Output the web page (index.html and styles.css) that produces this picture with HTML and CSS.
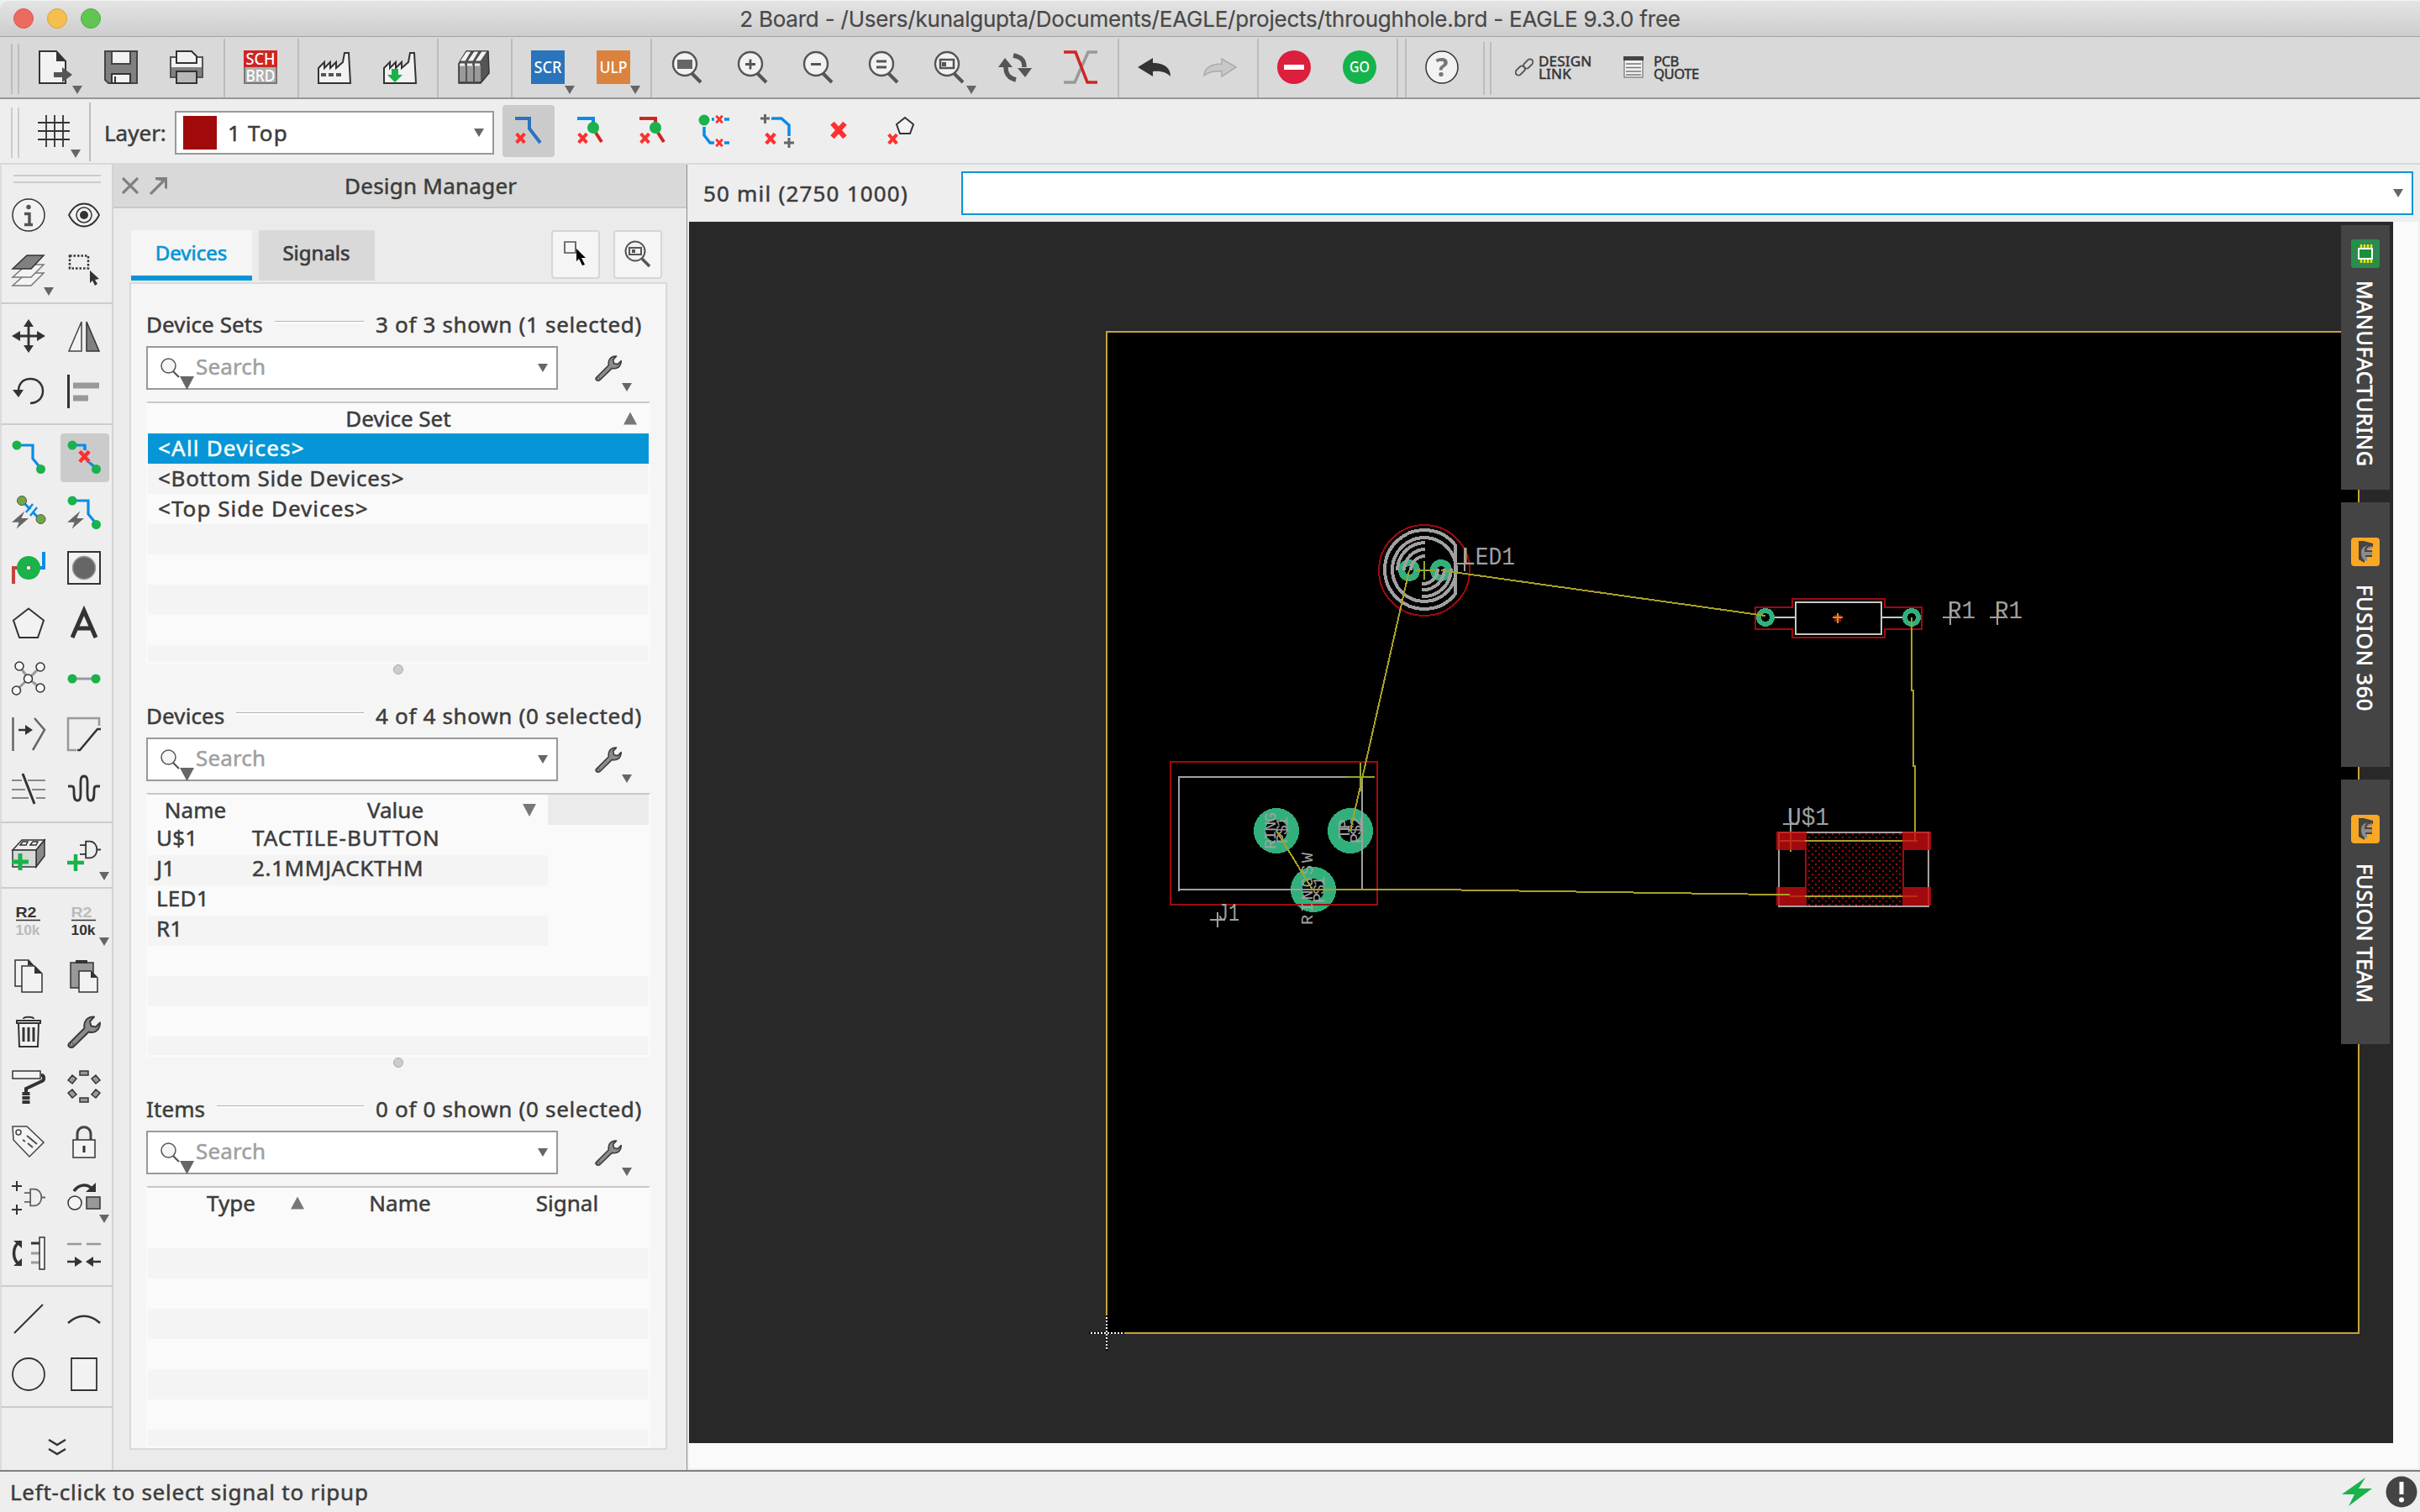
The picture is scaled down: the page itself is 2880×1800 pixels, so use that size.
FILE: index.html
```html
<!DOCTYPE html>
<html lang="en">
<head>
<meta charset="utf-8">
<title>2 Board - EAGLE 9.3.0 free</title>
<link rel="stylesheet" href="styles.css">
</head>
<body>
<svg class="defs" width="0" height="0">
  <defs>
    <symbol id="glass" viewBox="0 0 40 40"><path d="M25 27l11 11" stroke="#555" stroke-width="4"/><circle cx="17" cy="16" r="14" fill="#f2f2f2" stroke="#555" stroke-width="2.4"/></symbol>
    <symbol id="find" viewBox="0 0 24 24"><path d="M15 16l7 7" stroke="#555" stroke-width="2.200"/><circle cx="9.500" cy="9.500" r="8.500" fill="#f6f6f6" stroke="#555" stroke-width="1.500"/></symbol>
    <symbol id="wrench" viewBox="0 0 40 40"><path d="M2 34.500L20.500 16C19 8 24 2 32 2.500L27 8l1.500 5.500 5.500 1L39 9.500C39 18 33 22.500 25.500 20.500L7 38.500C3 40 0 37 2 34.500z" fill="#8c8c8c" stroke="#3c3c3c" stroke-width="2" stroke-linejoin="round"/><circle cx="5.500" cy="35" r="1.500" fill="#ddd" stroke="#333"/></symbol>
    <symbol id="x" viewBox="0 0 12 12"><path d="M1.500 1l9 10M10.500 1l-9 10" stroke="#ff3030" stroke-width="3.600"/></symbol>
    <symbol id="bolt" viewBox="0 0 22 22"><path d="M16 0L0 14h9L6 22 21 9h-9z" fill="#666"/></symbol>
    <symbol id="gate" viewBox="0 0 28 26"><path d="M8 2h5c13 0 13 22 0 22H8zM0 7h8M0 19h8M23 13h5" fill="none" stroke="#333" stroke-width="2"/></symbol>
    <symbol id="fusion" viewBox="0 0 34 34"><rect width="34" height="34" rx="4" fill="#f9a825"/><path d="M9 4h6l11 3v4c-7 0-10 3-10 8v11L9 26z" fill="#4a4440"/><path d="M12 18c0-7 5-9 13-9v4c-4 0-6 1-6 4h6v4h-6v7c-5-1-7-5-7-10z" fill="#8c8c8c"/><path d="M26 9c-7 0-9 3-9 7h8M25 22h-8" fill="none" stroke="#4a4440" stroke-width="2"/></symbol>
    <pattern id="dots" x="2152" y="992" width="8" height="8" patternUnits="userSpaceOnUse"><rect x="4" width="2" height="2" fill="#a00a0e"/><rect y="4" width="2" height="2" fill="#a00a0e"/></pattern>
  </defs>
</svg>

<header class="titlebar">
  <div class="lights"><i class="red"></i><i class="amber"></i><i class="green"></i></div>
  <h1>2 Board - /Users/kunalgupta/Documents/EAGLE/projects/throughhole.brd - EAGLE 9.3.0 free</h1>
</header>

<nav class="toolbar main">
  <span class="grip"></span>
  <button class="has-menu"><svg viewBox="0 0 40 40"><path d="M1 1h20l11 12v26H1z" fill="#f2f2f2" stroke="#333" stroke-width="2"/><path d="M21 1v12h11z" fill="#333"/><path d="M18 26h10v-6l12 9-12 9v-6H18z" fill="#555"/></svg></button>
  <button><svg viewBox="0 0 40 40"><path d="M1 1h38v38H5l-4-4z" fill="#808080" stroke="#444" stroke-width="2"/><path d="M9 1h22v15H9z" fill="#f2f2f2" stroke="#444" stroke-width="2"/><path d="M9 28h22v11H9z" fill="#f2f2f2" stroke="#333" stroke-width="2"/><path d="M13 31v7" stroke="#333" stroke-width="2"/></svg></button>
  <button><svg viewBox="0 0 40 40"><path d="M1 8h38v24H1z" fill="#808080" stroke="#555" stroke-width="2"/><path d="M2 9h36v11H2z" fill="#f2f2f2"/><path d="M8 1h18l6 6v8H8z" fill="#f2f2f2" stroke="#333" stroke-width="2"/><path d="M8 25h24v14H8z" fill="#b8b8b8" stroke="#333" stroke-width="2"/></svg></button>
  <span class="sep"></span>
  <button><svg viewBox="0 0 40 40"><rect x="1" y="1" width="38" height="38" fill="#b0b0b0" stroke="#777" stroke-width="2"/><path d="M0 0h40v20H0z" fill="#cf2522"/><text x="20" y="17" class="tag" textLength="35" lengthAdjust="spacingAndGlyphs">SCH</text><text x="20" y="37" class="tag" textLength="35" lengthAdjust="spacingAndGlyphs">BRD</text></svg></button>
  <span class="sep"></span>
  <button><svg viewBox="0 0 40 40"><path d="M1 39V21l7-7v7l7-7v7l7-7v7l8-7 2-11h5l2 36z" fill="#f2f2f2" stroke="#333" stroke-width="2"/><path d="M4 29h24" stroke="#555" stroke-width="4" stroke-dasharray="6 3"/></svg></button>
  <button><svg viewBox="0 0 40 40"><path d="M1 39V21l7-7v7l7-7v7l7-7v7l8-7 2-11h5l2 36z" fill="#f2f2f2" stroke="#333" stroke-width="2"/><path d="M10 22h8v7h5l-9 9-9-9h5z" fill="#19b24b"/></svg></button>
  <span class="sep"></span>
  <button><svg viewBox="0 0 40 40"><path d="M2 16L11 1h26l1 26-10 12H2z" fill="#555" stroke="#333" stroke-width="1.500"/><path d="M3 13L11 1h6l-7 12zM12 13l8-12h6l-7 12zM21 13l8-12h7l-8 12z" fill="#f2f2f2" stroke="#444"/><path d="M3 17h7v20H3zM12 17h7v20h-7zM21 17h7v20h-7z" fill="#999"/><path d="M3 17h6M12 17h6M21 17h6" stroke="#eee" stroke-width="3"/></svg></button>
  <span class="sep"></span>
  <button class="has-menu"><svg viewBox="0 0 40 40"><path d="M0 0h40v40H0z" fill="#2b73ba"/><text x="20" y="27" class="tag" textLength="33" lengthAdjust="spacingAndGlyphs">SCR</text></svg></button>
  <button class="has-menu"><svg viewBox="0 0 40 40"><path d="M0 0h40v40H0z" fill="#db833e"/><text x="20" y="27" class="tag" textLength="33" lengthAdjust="spacingAndGlyphs">ULP</text></svg></button>
  <span class="sep"></span>
  <button><svg viewBox="0 0 40 40"><use href="#glass"/><path d="M8 11h18v11H8z" fill="#666"/></svg></button>
  <button><svg viewBox="0 0 40 40"><use href="#glass"/><path d="M11 16.500h12M17 10.500v12" stroke="#555" stroke-width="2.800"/></svg></button>
  <button><svg viewBox="0 0 40 40"><use href="#glass"/><path d="M11 16.500h12" stroke="#555" stroke-width="3"/></svg></button>
  <button><svg viewBox="0 0 40 40"><use href="#glass"/><path d="M11 13h12M11 20h12" stroke="#555" stroke-width="3"/></svg></button>
  <button class="has-menu"><svg viewBox="0 0 40 40"><use href="#glass"/><path d="M9 11h16v10H9z" fill="none" stroke="#555" stroke-width="2.600"/><path d="M11 14h5v5h-5z" fill="#555"/></svg></button>
  <button><svg viewBox="0 0 40 40"><path d="M9 20c0 9 4 13 12 15M31 20c0-9-4-12-13-14" fill="none" stroke="#555" stroke-width="5.500"/><path d="M0 20l8-11 9 11zM23 21h17l-8 11z" fill="#555"/></svg></button>
  <button><svg viewBox="0 0 40 40"><path d="M40 2H29L13 38H0" fill="none" stroke="#999" stroke-width="3.500"/><path d="M0 2h14l14 36h12" fill="none" stroke="#cf2522" stroke-width="3.500"/></svg></button>
  <span class="sep"></span>
  <button><svg viewBox="0 0 40 40"><path d="M0 20L18 9v6c15 0 21 7 21 16-5-5-11-7-21-6v6z" fill="#333"/></svg></button>
  <button><svg viewBox="0 0 40 40"><path d="M39 20L22 10v6C8 16 1 22 1 30c5-4 11-6 21-5v6z" fill="#c8c8c8" stroke="#aaa" stroke-width="1.500"/></svg></button>
  <span class="sep"></span>
  <button><svg viewBox="0 0 40 40"><circle cx="20" cy="20" r="20" fill="#dc1f3c"/><path d="M8 17h24v6H8z" fill="#fff"/></svg></button>
  <button><svg viewBox="0 0 40 40"><circle cx="20" cy="20" r="20" fill="#15b34b"/><text x="20" y="26" class="tag go" textLength="24" lengthAdjust="spacingAndGlyphs">GO</text></svg></button>
  <span class="sep"></span><span class="sep"></span>
  <button><svg viewBox="0 0 40 40"><circle cx="20" cy="20" r="19" fill="#f2f2f2" stroke="#333" stroke-width="1.500"/><text x="20" y="31" class="help">?</text></svg></button>
  <span class="grip second"></span>
  <a class="link design"><svg width="22" height="22" viewBox="0 0 22 22"><g fill="none" stroke="#555" stroke-width="2"><rect x="9" y="4" width="13" height="7" rx="3.500" transform="rotate(-45 15 7)"/><rect x="0" y="11" width="13" height="7" rx="3.500" transform="rotate(-45 7 15)"/></g></svg><span>DESIGN<br>LINK</span></a>
  <a class="link quote"><svg width="24" height="26" viewBox="0 0 24 26"><path d="M1 1h22v24H1z" fill="#f2f2f2" stroke="#888" stroke-width="1.500"/><path d="M0 0h24v5H0z" fill="#444"/><path d="M3 9h18M3 13.500h18M3 18h18M3 22h18" stroke="#777" stroke-width="1.600"/></svg><span>PCB<br>QUOTE</span></a>
</nav>

<nav class="toolbar options">
  <span class="grip"></span>
  <button class="grid has-menu"><svg viewBox="0 0 40 40"><path d="M11 1v38M21 1v38M31 1v38M1 10h38M1 20h38M1 30h38" stroke="#333" stroke-width="1.800"/></svg></button>
  <span class="sep"></span>
  <label class="layer-label">Layer:</label>
  <div class="layer-combo"><i class="swatch"></i><span>1 Top</span><b class="tri"></b></div>
  <div class="modes">
    <button class="on"><svg viewBox="0 0 40 40"><path d="M4 5h17v12l13 17" fill="none" stroke="#2b73c0" stroke-width="4"/><use href="#x" x="4" y="22" width="13" height="13"/></svg></button>
    <button><svg viewBox="0 0 40 40"><path d="M4 5h19v5" fill="none" stroke="#0a8ce8" stroke-width="4"/><path d="M26 22l7 11" stroke="#cf2522" stroke-width="4"/><circle cx="23" cy="16" r="7" fill="#19b24b"/><use href="#x" x="4" y="22" width="13" height="13"/></svg></button>
    <button><svg viewBox="0 0 40 40"><path d="M4 5h19v5" fill="none" stroke="#cf2522" stroke-width="4"/><path d="M26 22l7 11" stroke="#cf2522" stroke-width="4"/><circle cx="23" cy="16" r="7" fill="#19b24b"/><use href="#x" x="4" y="22" width="13" height="13"/></svg></button>
    <button><svg viewBox="0 0 40 40"><path d="M7 15v10l7 9h23M16 6h21" fill="none" stroke="#0a8ce8" stroke-width="3.500"/><circle cx="7" cy="7" r="6.500" fill="#19b24b"/><path d="M19 3h12v6H19zM19 31h12v6H19z" fill="#eee"/><use href="#x" x="20" y="1" width="10" height="10"/><use href="#x" x="20" y="29" width="10" height="10"/></svg></button>
    <button><svg viewBox="0 0 40 40"><path d="M13 5h12l9 8v13" fill="none" stroke="#0a8ce8" stroke-width="3.500"/><path d="M0 5h11M5.500 0v11M28 34h12M34 28v12" stroke="#666" stroke-width="3"/><use href="#x" x="5" y="22" width="14" height="14"/></svg></button>
    <button><svg viewBox="0 0 40 40"><use href="#x" x="9" y="9" width="20" height="20"/></svg></button>
    <button><svg viewBox="0 0 40 40"><path d="M24 4l10 8-4 11H18l-4-11z" fill="#f2f2f2" stroke="#333" stroke-width="2"/><use href="#x" x="3" y="23" width="13" height="13"/></svg></button>
  </div>
</nav>

<main class="workspace">
  <aside class="tools">
    <div class="tools-grip"></div>
    <div class="tool-group">
      <button><svg viewBox="0 0 40 40"><circle cx="20" cy="20" r="19" fill="#f2f2f2" stroke="#333" stroke-width="1.500"/><circle cx="20" cy="10.500" r="2.700" fill="#555"/><path d="M15 18.500h6v13M15 31.500h10" fill="none" stroke="#555" stroke-width="3.500"/></svg></button>
      <button><svg viewBox="0 0 40 40"><path d="M2 20c9-18 27-18 36 0-9 18-27 18-36 0z" fill="#f2f2f2" stroke="#333" stroke-width="1.800"/><circle cx="20" cy="20" r="9" fill="none" stroke="#333" stroke-width="1.500"/><circle cx="20" cy="20" r="5" fill="#333"/></svg></button>
      <button class="has-menu"><svg viewBox="0 0 40 40"><g stroke="#777" stroke-width="1.500" fill="#f4f4f4"><path d="M1 38l17-15h20L23 38z"/><path d="M1 28l17-15h20L23 28z"/><path d="M1 18L18 2h20L23 18z" fill="#808080" stroke="#333"/></g></svg></button>
      <button><svg viewBox="0 0 40 40"><path d="M3 2.500h22v15H3z" fill="none" stroke="#333" stroke-width="2.500" stroke-dasharray="2.500 2"/><path d="M27 20l11 10-5 1 3 5-3 2-3-6-3 3z" fill="#333"/></svg></button>
    </div>
    <div class="tool-group">
      <button><svg viewBox="0 0 40 40"><path d="M7 20h26M20 7v26" stroke="#333" stroke-width="2.800"/><path d="M0 20l10-6v12zM40 20l-10-6v12zM20 0l-6 9h12zM20 40l-6-9h12z" fill="#333"/></svg></button>
      <button><svg viewBox="0 0 40 40"><path d="M17 3v35H2z" fill="#f2f2f2" stroke="#444" stroke-width="1.500"/><path d="M23 3v35h15z" fill="#808080" stroke="#333" stroke-width="1.500"/></svg></button>
      <button><svg viewBox="0 0 40 40"><path d="M8 20C8 9 15 5 22 5c20 0 20 29 0 29" fill="none" stroke="#333" stroke-width="2.500"/><path d="M1 18h13l-6 9z" fill="#333"/></svg></button>
      <button><svg viewBox="0 0 40 40"><path d="M1.500 0v40" stroke="#333" stroke-width="3"/><path d="M7 13h31M7 28h18" stroke="#999" stroke-width="7"/></svg></button>
    </div>
    <div class="tool-group">
      <button><svg viewBox="0 0 40 40"><path d="M6 6h19v16l10 12" fill="none" stroke="#0a8ce8" stroke-width="3.200"/><circle cx="6" cy="6" r="5.500" fill="#19b24b"/><circle cx="34.500" cy="34.500" r="5.500" fill="#19b24b"/></svg></button>
      <button class="on"><svg viewBox="0 0 40 40"><path d="M6 6h15v16l14 12" fill="none" stroke="#0a8ce8" stroke-width="3.200"/><circle cx="6" cy="6" r="5.500" fill="#19b24b"/><circle cx="34.500" cy="34.500" r="5.500" fill="#19b24b"/><path d="M12 12h17v14H12z" fill="#ccc"/><path d="M21 6v6" stroke="#0a8ce8" stroke-width="3"/><use href="#x" x="13" y="12" width="15" height="15"/></svg></button>
      <button><svg viewBox="0 0 40 40"><path d="M12 6l22 23" stroke="#0a8ce8" stroke-width="3"/><path d="M19 18l9-5 1 5-9 5z" fill="#eee"/><path d="M17 20l8-10M22 24l8-10" stroke="#0a8ce8" stroke-width="2.500"/><circle cx="12" cy="6" r="5.500" fill="#6fa843" stroke="#555"/><circle cx="34.500" cy="28" r="5.500" fill="#6fa843" stroke="#555"/><use href="#bolt" x="0" y="18" width="21" height="22"/></svg></button>
      <button><svg viewBox="0 0 40 40"><path d="M6 6h19v16l10 12" fill="none" stroke="#0a8ce8" stroke-width="3.200"/><circle cx="6" cy="6" r="5.500" fill="#19b24b"/><circle cx="34.500" cy="34.500" r="5.500" fill="#19b24b"/><use href="#bolt" x="0" y="18" width="21" height="22"/></svg></button>
      <button><svg viewBox="0 0 40 40"><path d="M2 39V20h10" fill="none" stroke="#c8403c" stroke-width="4"/><path d="M38 1v19H28" fill="none" stroke="#0a8ce8" stroke-width="4"/><circle cx="20" cy="20" r="14" fill="#19b24b"/><circle cx="20" cy="20" r="2.800" fill="#f2f2f2" stroke="#5a7a3a"/></svg></button>
      <button><svg viewBox="0 0 40 40"><path d="M1 1h38v38H1z" fill="#f2f2f2" stroke="#333" stroke-width="2"/><circle cx="20" cy="20" r="13.500" fill="#666" stroke="#999" stroke-width="1.500"/></svg></button>
      <button><svg viewBox="0 0 40 40"><path d="M20 2.500l18 14L31 37H9L2 16.500z" fill="#f2f2f2" stroke="#333" stroke-width="2"/></svg></button>
      <button><svg viewBox="0 0 40 40"><path d="M6 37L20 5l14 32M11 26h18" fill="none" stroke="#333" stroke-width="5"/></svg></button>
      <button><svg viewBox="0 0 40 40"><path d="M9 5l11 15L34 6M5 34l15-14 14 11" fill="none" stroke="#999" stroke-width="3"/><g fill="#f8f8f8" stroke="#333" stroke-width="1.500"><circle cx="9" cy="5" r="5"/><circle cx="34" cy="6" r="5"/><circle cx="5.500" cy="34" r="5"/><circle cx="34" cy="31" r="5"/><circle cx="19.500" cy="20" r="5"/></g></svg></button>
      <button><svg viewBox="0 0 40 40"><path d="M6 20h28" stroke="#999" stroke-width="3"/><circle cx="6" cy="20" r="5.500" fill="#19b24b"/><circle cx="34" cy="20" r="5.500" fill="#19b24b"/></svg></button>
      <button><svg viewBox="0 0 40 40"><path d="M1.500 0v40M27 1l12 14-14 24" fill="none" stroke="#666" stroke-width="2.500"/><path d="M8 15h10" stroke="#333" stroke-width="2.500"/><path d="M16 9l9 6-9 6z" fill="#333"/></svg></button>
      <button><svg viewBox="0 0 40 40"><path d="M38 10V1H1v38h10" fill="none" stroke="#999" stroke-width="2.500"/><path d="M12 39h3l21-25h4" fill="none" stroke="#333" stroke-width="2.500"/></svg></button>
      <button><svg viewBox="0 0 40 40"><path d="M0 9h12M19 9h21M0 20h16M24 20h16M0 30h20M29 30h11" stroke="#888" stroke-width="1.800"/><path d="M13 1l14 36" stroke="#333" stroke-width="3"/></svg></button>
      <button><svg viewBox="0 0 40 40"><path d="M1 16h4c3 0 3 2 3 6 0 6 0 11 4 11s4-4 4-11c0-12-1-18 4-18s4 6 4 18c0 7 0 11 4 11s4-5 4-11c0-4 0-6 3-6h4" fill="none" stroke="#333" stroke-width="2.800"/></svg></button>
    </div>
    <div class="tool-group">
      <button><svg viewBox="0 0 40 40"><path d="M1 14L12 2h27L29 14z" fill="#eee" stroke="#333" stroke-width="1.500"/><path d="M29 14L39 2v19L29 34z" fill="#888" stroke="#333" stroke-width="1.500"/><path d="M1 14h28v20H1z" fill="#d8d8d8" stroke="#333" stroke-width="1.500"/><path d="M10 8l3-4h6l-2 4zM22 8l3-4h6l-2 4z" fill="#f4f4f4" stroke="#333" stroke-width="1.500"/><path d="M0 28h20M10 18v20" stroke="#19b24b" stroke-width="5"/></svg></button>
      <button class="has-menu"><svg viewBox="0 0 40 40"><use href="#gate" x="15" y="1" width="25" height="25"/><path d="M0 29h20M10 19v20" stroke="#19b24b" stroke-width="4.500"/></svg></button>
    </div>
    <div class="tool-group">
      <button><svg viewBox="0 0 40 40"><text x="17" y="16" class="val dark" textLength="25" lengthAdjust="spacingAndGlyphs">R2</text><path d="M5 19.500h29" stroke="#333" stroke-width="1.500"/><text x="19" y="37" class="val pale" textLength="29" lengthAdjust="spacingAndGlyphs">10k</text></svg></button>
      <button class="has-menu"><svg viewBox="0 0 40 40"><text x="17" y="16" class="val pale" textLength="25" lengthAdjust="spacingAndGlyphs">R2</text><path d="M5 19.500h29" stroke="#333" stroke-width="1.500"/><text x="19" y="37" class="val dark" textLength="29" lengthAdjust="spacingAndGlyphs">10k</text></svg></button>
      <button><svg viewBox="0 0 40 40"><g fill="#f2f2f2" stroke="#333" stroke-width="1.500"><path d="M4 1h16l6 7v24H4z"/><path d="M12 8h15l9 9v22H12z"/></g><path d="M19 1v6h7zM27 8v9h9z" fill="#333"/></svg></button>
      <button><svg viewBox="0 0 40 40"><path d="M4 4h27v30H4z" fill="#999" stroke="#333" stroke-width="1.500"/><path d="M10 1h14v4H10z" fill="#333"/><path d="M14 14h14l8 8v17H14z" fill="#f2f2f2" stroke="#333" stroke-width="1.500"/><path d="M28 14v8h8z" fill="#333"/></svg></button>
      <button><svg viewBox="0 0 40 40"><path d="M14 5c0-3 12-3 12 0M6 7h28v3H6zM8 10h24l-1 28H9z" fill="#f2f2f2" stroke="#333" stroke-width="2"/><path d="M14 15v17M20 15v17M26 15v17" stroke="#333" stroke-width="3"/></svg></button>
      <button><svg viewBox="0 0 40 40"><use href="#wrench"/></svg></button>
      <button><svg viewBox="0 0 40 40"><path d="M1 1h33v9H1z" fill="#f2f2f2" stroke="#333" stroke-width="1.500"/><path d="M35 6c4 0 4 6 1 7L17 22v4" fill="none" stroke="#333" stroke-width="4"/><path d="M17 26v14" stroke="#333" stroke-width="9" stroke-dasharray="4 1"/></svg></button>
      <button><svg viewBox="0 0 40 40"><g fill="#999" stroke="#333" stroke-width="1.500"><path d="M15 1h10v5H15zM15 33h10v5H15zM1 12l5-6 5 4-5 6zM39 12l-5-6-5 4 5 6zM1 27l5 6 5-4-5-6zM39 27l-5 6-5-4 5-6z"/></g></svg></button>
      <button><svg viewBox="0 0 40 40"><path d="M1 1h17l20 19-17 17L2 17z" fill="#f4f4f4" stroke="#444" stroke-width="1.500"/><circle cx="8" cy="8" r="3" fill="none" stroke="#444" stroke-width="1.500"/><path d="M18 12l12 10M13 17l3 2M19 21l6 5" stroke="#444" stroke-width="1.700"/></svg></button>
      <button><svg viewBox="0 0 40 40"><path d="M12 18v-8c0-11 16-11 16 0v8" fill="none" stroke="#444" stroke-width="3"/><path d="M7 17h26v21H7z" fill="#f4f4f4" stroke="#333" stroke-width="1.500"/><path d="M20 24v8" stroke="#333" stroke-width="3"/></svg></button>
      <button><svg viewBox="0 0 40 40"><path d="M0 6h12M6 0v12M0 34h12M6 28v12" stroke="#333" stroke-width="2"/><use href="#gate" x="15" y="7" width="25" height="25" opacity=".75"/></svg></button>
      <button class="has-menu"><svg viewBox="0 0 40 40"><path d="M8 12c6-9 17-9 22-2" fill="none" stroke="#333" stroke-width="3.500"/><path d="M34 2v11H22z" fill="#333"/><circle cx="9" cy="26" r="8" fill="#f4f4f4" stroke="#333" stroke-width="1.500"/><path d="M23 19h16v14H23z" fill="#999" stroke="#333" stroke-width="1.500"/></svg></button>
      <button><svg viewBox="0 0 40 40"><path d="M10 6c-10 6-10 22 0 28" fill="none" stroke="#333" stroke-width="3.500"/><path d="M2 5h10v9zM2 35h10v-9z" fill="#333"/><path d="M23 8h11" stroke="#333" stroke-width="3"/><path d="M23 20h11M23 31h11" stroke="#999" stroke-width="3"/><path d="M33 1h6v38h-6z" fill="#f4f4f4" stroke="#333" stroke-width="1.500"/></svg></button>
      <button><svg viewBox="0 0 40 40"><path d="M0 9h17M23 9h17" stroke="#999" stroke-width="2.500"/><path d="M0 30h10M30 30h10" stroke="#333" stroke-width="2.500"/><path d="M9 24l9 6-9 6zM31 24l-9 6 9 6z" fill="#333"/></svg></button>
    </div>
    <div class="tool-group">
      <button><svg viewBox="0 0 40 40"><path d="M3 37L37 3" stroke="#333" stroke-width="2"/></svg></button>
      <button><svg viewBox="0 0 40 40"><path d="M1 25c12-11 26-11 38 0" fill="none" stroke="#333" stroke-width="2.500"/></svg></button>
      <button><svg viewBox="0 0 40 40"><circle cx="20" cy="20" r="19" fill="none" stroke="#333" stroke-width="1.800"/></svg></button>
      <button><svg viewBox="0 0 40 40"><path d="M5 1h30v38H5z" fill="#f2f2f2" stroke="#333" stroke-width="1.800"/></svg></button>
    </div>
    <div class="more"><svg width="22" height="22" viewBox="0 0 22 22"><path d="M1 2l10 6 10-6M1 13l10 6 10-6" fill="none" stroke="#333" stroke-width="2.400"/></svg></div>
  </aside>

  <section class="dock">
    <header class="dock-title">
      <svg width="20" height="20" viewBox="0 0 20 20"><path d="M1 1l18 18M19 1L1 19" stroke="#808080" stroke-width="3.200"/></svg>
      <svg width="22" height="22" viewBox="0 0 22 22"><path d="M1 21L17 5" stroke="#808080" stroke-width="3.200"/><path d="M7 1h14v14l-3-1V6L7 4z" fill="#808080"/></svg>
      <h2>Design Manager</h2>
    </header>
    <div class="tabs">
      <a class="tab active">Devices</a>
      <a class="tab">Signals</a>
      <button class="first"><svg viewBox="0 0 40 40"><path d="M7 5h13v13H7z" fill="none" stroke="#555" stroke-width="1.700"/><path d="M21 13l11 11h-5l4 8-3 1-4-8-3 3z" fill="#000"/></svg></button>
      <button><svg viewBox="0 0 40 40"><path d="M25 25l9 9" stroke="#555" stroke-width="3.500"/><circle cx="17" cy="16" r="11.500" fill="#f2f2f2" stroke="#555" stroke-width="2"/><path d="M10 12h14v8H10z" fill="none" stroke="#555" stroke-width="2"/><path d="M13 14h4v4h-4z" fill="#555"/></svg></button>
    </div>
    <div class="panel">
      <section class="list">
        <div class="caption"><h3>Device Sets</h3><hr><span>3 of 3 shown (1 selected)</span></div>
        <div class="search"><div class="field"><svg width="24" height="24"><use href="#find"/></svg><b class="tri big"></b><span>Search</span><b class="tri"></b></div><svg class="wrench" width="32" height="32"><use href="#wrench"/></svg><b class="tri menu"></b></div>
        <div class="table sets">
          <div class="thead"><span>Device Set</span><b class="tri up"></b></div>
          <div class="tr selected">&lt;All Devices&gt;</div>
          <div class="tr bottom-side">&lt;Bottom Side Devices&gt;</div>
          <div class="tr">&lt;Top Side Devices&gt;</div>
          <div class="tr"></div><div class="tr"></div><div class="tr"></div><div class="tr"></div><div class="tr"></div>
        </div>
      </section>
      <div class="splitter"><i></i></div>
      <section class="list">
        <div class="caption"><h3>Devices</h3><hr><span>4 of 4 shown (0 selected)</span></div>
        <div class="search"><div class="field"><svg width="24" height="24"><use href="#find"/></svg><b class="tri big"></b><span>Search</span><b class="tri"></b></div><svg class="wrench" width="32" height="32"><use href="#wrench"/></svg><b class="tri menu"></b></div>
        <div class="table devices">
          <div class="thead"><span>Name</span><span>Value</span><b class="tri down"></b><i></i></div>
          <div class="tr"><span>U$1</span><span class="wide">TACTILE-BUTTON</span></div>
          <div class="tr short"><span>J1</span><span>2.1MMJACKTHM</span></div>
          <div class="tr"><span>LED1</span></div>
          <div class="tr short"><span>R1</span></div>
          <div class="tr"></div><div class="tr"></div><div class="tr"></div><div class="tr"></div>
        </div>
      </section>
      <div class="splitter"><i></i></div>
      <section class="list">
        <div class="caption"><h3>Items</h3><hr><span>0 of 0 shown (0 selected)</span></div>
        <div class="search"><div class="field"><svg width="24" height="24"><use href="#find"/></svg><b class="tri big"></b><span>Search</span><b class="tri"></b></div><svg class="wrench" width="32" height="32"><use href="#wrench"/></svg><b class="tri menu"></b></div>
        <div class="table items">
          <div class="thead"><span>Type</span><b class="tri up"></b><span>Name</span><span>Signal</span></div>
          <div class="tr"></div><div class="tr"></div><div class="tr"></div><div class="tr"></div><div class="tr"></div><div class="tr"></div><div class="tr"></div><div class="tr"></div>
        </div>
      </section>
    </div>
  </section>

  <section class="editor">
    <div class="command"><span>50 mil (2750 1000)</span><div class="entry"><b class="tri"></b></div></div>
    <div class="canvas">
      <svg class="board" width="2028" height="1454" viewBox="820 264 2028 1454" shape-rendering="crispEdges" fill="none" stroke-width="2">
        <path d="M1317 395H2807V1587H1317z" fill="#000" stroke="#c4a33a"/>
        <!-- origin cross -->
        <path d="M1296 1587h42M1317 1566v42" stroke="#000"/>
        <path d="M1298 1587h40M1317 1568v38" stroke="#fff" stroke-dasharray="2 2"/>
        <!-- J1 power jack -->
        <path d="M1393 907h246v170h-246z" stroke="#a00a0e"/>
        <g fill="#000" stroke="#32b07c" stroke-width="14"><circle cx="1519" cy="989" r="20"/><circle cx="1607" cy="989" r="20"/><circle cx="1563" cy="1059" r="20"/></g>
        <path d="M1403 1061V925h218v134H1403M1440 1095h18M1449 1086v18M1542 1077h40" stroke="#a0a0a0"/>
        <path d="M1393 1077h246" stroke="#a00a0e"/>
        <path d="M1604 925h32M1619 908v34" stroke="#94a82a"/>
        <g class="silk"><text x="1449" y="1096" textLength="26" lengthAdjust="spacingAndGlyphs">J1</text>
          <text class="pin" transform="translate(1562 1101) rotate(-90)" textLength="86">RINGSW</text>
          <text class="pin" transform="translate(1576 1075) rotate(-90)" textLength="32">P$1</text>
          <text class="pin" transform="translate(1518 1011) rotate(-90)" textLength="44">RING</text>
          <text class="pin" transform="translate(1532 1004) rotate(-90)" textLength="32">P$1</text>
          <text class="pin" transform="translate(1606 999) rotate(-90)" textLength="24">TIP</text>
          <text class="pin" transform="translate(1620 1004) rotate(-90)" textLength="32">P$2</text></g>
        <!-- LED1 -->
        <g fill="#000" stroke="#32b07c" stroke-width="8"><circle cx="1677" cy="679" r="9"/><circle cx="1715" cy="679" r="9"/></g>
        <circle cx="1695" cy="679" r="54" stroke="#a00a0e"/>
        <g stroke="#a0a0a0" stroke-width="4"><path d="M1732 649a47 47 0 1 0 0 58z"/><circle cx="1695" cy="678" r="38"/><path d="M1696 646a33 33 0 0 0-33 33M1696 654a25 25 0 0 0-25 25M1696 662a17 17 0 0 0-17 17M1692 710a33 33 0 0 0 35-33M1692 702a25 25 0 0 0 27-25M1692 695a18 18 0 0 0 19-18"/></g>
        <path d="M1684 679h24M1695 668v22" stroke="#94a82a"/>
        <path d="M1734 671h18M1743 652v28" stroke="#a0a0a0"/>
        <text class="silk" x="1740" y="672" textLength="63" lengthAdjust="spacingAndGlyphs">LED1</text>
        <!-- R1 resistor -->
        <path d="M2089 723h44v-10h110v10h44v26h-44v10h-110v-10h-44z" stroke="#a00a0e"/>
        <path d="M2137 717h102v38h-102zM2110 735h27M2240 735h26" stroke="#c8c8c8"/>
        <g fill="#000" stroke="#32b07c" stroke-width="6"><circle cx="2101" cy="735" r="8"/><circle cx="2275" cy="735" r="8"/></g>
        <path d="M2183 732h8v8h-8z" fill="#a00a0e"/><path d="M2181 735h12M2187 730v12" stroke="#c89a20"/>
        <path d="M2312 735h18M2321 716v28M2368 735h18M2377 716v28" stroke="#a0a0a0"/>
        <text class="silk" x="2318" y="736" textLength="33" lengthAdjust="spacingAndGlyphs">R1</text>
        <text class="silk" x="2374" y="736" textLength="33" lengthAdjust="spacingAndGlyphs">R1</text>
        <!-- U$1 tactile button -->
        <path d="M2117 991h178v88h-178z" stroke="#a8a0a0"/>
        <path d="M2149 992h116v86h-116z" fill="url(#dots)"/>
        <path d="M2149 992v86M2265 992v86" stroke="#a00a0e"/>
        <path d="M2114 990h36v22h-36zM2264 990h34v22h-34zM2114 1056h36v22h-36zM2264 1056h34v22h-34z" fill="#a00a0e"/>
        <path d="M2117 991h33M2117 991v21M2295 991v21M2264 991h33M2117 1056v22M2295 1056v22" stroke="#c02828"/>
        <path d="M2122 981h18M2131 962v32" stroke="#a0a0a0"/>
        <text class="silk" x="2127" y="982" textLength="50" lengthAdjust="spacingAndGlyphs">U$1</text>
        <path d="M2148 1001h116M2148 1067h116M2131 1012v2" stroke="#a8a028"/>
        <path d="M2117 1001h31M2264 1001h18M2130 1067h18M2264 1067h18M2131 990v22M2279 990v10" stroke="#c02c14"/>
        <!-- airwires -->
        <path d="M1519 989l43 70M1677 679l-70 310M1715 679l386 54M2275 735v87h2v90h2v78M1563 1059h142l409 6h16" stroke="#a8a028"/>
      </svg>
      <div class="side-tabs">
        <a class="made"><svg width="34" height="34" viewBox="0 0 34 34"><rect width="34" height="34" rx="3" fill="#2b8a50"/><path d="M0 4l34 28" stroke="#12a030" stroke-width="2"/><path d="M12 6v22M16 6v22M20 6v22M24 6v22" stroke="#f4e400" stroke-width="2.500"/><path d="M9 11h16v12H9z" fill="#16923c" stroke="#fff" stroke-width="2"/></svg><span>MANUFACTURING</span></a>
        <a class="fusion"><svg width="34" height="34"><use href="#fusion"/></svg><span>FUSION 360</span></a>
        <a class="fusion team"><svg width="34" height="34"><use href="#fusion"/></svg><span>FUSION TEAM</span></a>
      </div>
    </div>
  </section>
</main>

<footer class="status">
  <span>Left-click to select signal to ripup</span>
  <svg width="36" height="36" viewBox="0 0 36 36"><path d="M28 1L0 21h15L8 35 36 14H20z" fill="#19b24b"/></svg>
  <svg width="38" height="38" viewBox="0 0 38 38"><circle cx="19" cy="19" r="18.500" fill="#444"/><path d="M19 7v15" stroke="#fff" stroke-width="5"/><circle cx="19" cy="28.500" r="3" fill="#fff"/></svg>
</footer>
</body>
</html>
```
FILE: styles.css
```css
* { box-sizing: border-box; }
body {
  margin: 0;
  width: 2880px;
  height: 1800px;
  display: flex;
  flex-direction: column;
  overflow: hidden;
  background: #eee;
  color: #3c3c3c;
  font: 26px/36px "Noto Sans", sans-serif;
  -webkit-text-stroke: .5px;
}
h1, h2, h3 { margin: 0; font-weight: 400; font-size: 26px; }
button { padding: 0; border: 0; background: none; display: flex; align-items: center; justify-content: center; position: relative; flex: none; }
button svg { width: 40px; height: 40px; overflow: visible; }
svg { flex: none; display: block; }
svg text { -webkit-text-stroke: 0; }
.defs { position: absolute; }

.tri { flex: none; width: 12px; height: 10px; background: #666; clip-path: polygon(0 0, 100% 0, 50% 100%); }
.tri.up, .tri.down { width: 16px; height: 15px; background: #777; }
.tri.up { clip-path: polygon(50% 0, 100% 100%, 0 100%); }
.has-menu::after { content: ""; position: absolute; right: 7px; top: 58px; width: 12px; height: 10px; background: #666; clip-path: polygon(0 0, 100% 0, 50% 100%); }

/* window title */
.titlebar { height: 44px; flex: none; display: flex; align-items: center; background: linear-gradient(#e4e4e4, #cdcdcd); border-top: 1px solid #f2f2f2; border-bottom: 1px solid #a4a4a4; border-top-left-radius: 10px; }
.lights { width: 160px; padding-left: 16px; display: flex; gap: 16px; }
.lights i { width: 24px; height: 24px; border-radius: 50%; border: 1px solid #d8574d; background: #ed6a5f; }
.lights .amber { background: #f5bf4f; border-color: #d9a13a; }
.lights .green { background: #61c554; border-color: #4ea73f; }
.titlebar h1 { flex: 1; padding: 2px 160px 0 0; text-align: center; font: 26px/40px Inter, sans-serif; color: #484848; letter-spacing: -.22px; -webkit-text-stroke: .2px; }

/* toolbars */
.toolbar { flex: none; display: flex; align-items: stretch; }
.toolbar.main { height: 74px; background: #d9d9d9; border-bottom: 2px solid #979797; }
.toolbar.main button { width: 78px; height: 72px; }
.grip { width: 10px; margin: 8px 4px 4px 13px; border: solid #bcbcbc; border-width: 0 2px; flex: none; }
.grip.second { margin: 6px 28px 3px 10px; }
.sep { width: 10px; margin-top: 2px; background: linear-gradient(#bcbcbc, #bcbcbc) 5px 0 / 2px 100% no-repeat; flex: none; }
.tag { font: 500 19px "Noto Sans", sans-serif; fill: #fff; text-anchor: middle; }
.tag.go { font-size: 18px; }
.help { font: 700 31px "Noto Sans", sans-serif; fill: #777; text-anchor: middle; }
.link { display: flex; align-items: center; font-size: 17px; line-height: 15px; color: #333; }
.link.design { gap: 6px; width: 129px; letter-spacing: .2px; }
.link.quote { gap: 12px; font-size: 16.5px; letter-spacing: -.4px; }
.link span { padding-bottom: 1px; }

.toolbar.options { height: 78px; border-bottom: 2px solid #d9d9d9; }
.toolbar.options .grip { margin: 10px 4px 6px 13px; border-color: #ccc; }
.toolbar.options button.grid { width: 74px; height: 76px; }
.toolbar.options button.grid::after { right: 5px; top: 60px; }
.toolbar.options .sep { margin: 4px 0 2px; }
.layer-label { width: 97px; padding-left: 13px; line-height: 80px; }
.layer-combo { width: 380px; height: 52px; margin-top: 14px; border: 2px solid #999; background: #fff; display: flex; align-items: center; padding: 0 10px 0 8px; }
.layer-combo .swatch { width: 40px; height: 40px; background: #a00a0a; margin-right: 13px; }
.layer-combo span { flex: 1; letter-spacing: 1.2px; }
.modes { display: flex; gap: 12px; padding: 7px 0 0 10px; }
.modes button { width: 62px; height: 62px; border-radius: 4px; }
.modes .on, .tools .on::before { background: #cbcbcb; }

/* workspace */
.workspace { flex: 1; display: flex; min-height: 0; }
.tools { width: 135px; flex: none; border-left: 2px solid #dcdcdc; border-right: 2px solid #d4d4d4; display: flex; flex-direction: column; }
.tools-grip { height: 10px; margin: 12px 13px 5px 14px; border: solid #ccc; border-width: 2px 0; flex: none; }
.tool-group { display: grid; grid-template-columns: 66px 66px; grid-auto-rows: 66px; margin-left: -1px; padding-bottom: 5px; margin-bottom: 5px; border-bottom: 2px solid #ccc; }
.tool-group button { width: 66px; height: 66px; }
.tool-group .has-menu::after { right: 3px; top: 53px; }
.tools .on svg { position: relative; }
.tools .on::before { content: ""; position: absolute; inset: 5px 3px 3px 5px; border-radius: 4px; }
.val { font: 700 16.5px "Liberation Sans", sans-serif; text-anchor: middle; }
.val.dark { fill: #333; }
.val.pale { fill: #bbb; }
.more { padding: 31px 0 0 55px; }

.dock { width: 683px; flex: none; background: #ebebeb; border-right: 1px solid #8a8a8a; display: flex; flex-direction: column; }
.dock-title { height: 52px; flex: none; display: flex; align-items: center; gap: 13px; padding-left: 10px; background: #d9d9d9; border-bottom: 2px solid #c8c8c8; }
.dock-title h2 { padding: 0 0 0 197px; letter-spacing: .25px; }
.tabs { height: 60px; margin: 26px 0 2px 21px; display: flex; align-items: flex-start; flex: none; }
.tab { height: 60px; line-height: 53px; text-align: center; font-size: 24px; background: #d9d9d9; -webkit-text-stroke: .7px; width: 138px; padding-right: 1px; }
.tab.active { width: 144px; margin-right: 8px; color: #0696d7; background: #f5f5f5; border-bottom: 6px solid #0696d7; }
.tabs button { width: 58px; height: 58px; border: 2px solid #d6d6d6; border-radius: 4px; background: #f5f5f5; margin-left: 16px; }
.tabs button.first { margin-left: 210px; }
.panel { width: 640px; height: 1390px; flex: none; margin-left: 19px; padding: 30px 18px 0; background: #f5f5f5; border: 2px solid #d9d9d9; display: flex; flex-direction: column; }
.caption { display: flex; height: 36px; align-items: center; padding-right: 10px; margin-bottom: 8px; }
.caption h3 { letter-spacing: .1px; }
.caption hr { flex: 1; height: 3px; margin: 0 14px 6px; border: 0; background: #fff; border-top: 1px solid #b4b4b4; }
.caption span { width: 317px; white-space: nowrap; letter-spacing: .68px; }
.search { display: flex; position: relative; margin-bottom: 14px; }
.field { position: relative; width: 490px; height: 52px; border: 2px solid #999; background: #fff; display: flex; align-items: center; padding: 0 10px 0 15px; color: #a0a0a0; }
.field span { flex: 1; padding: 0 0 4px 18px; letter-spacing: .15px; }
.field .big { position: absolute; left: 38px; top: 34px; width: 17px; height: 16px; }
.wrench { margin: 10px 0 0 44px; }
.search .menu { position: absolute; left: 566px; top: 44px; }
.table { height: 312px; border: 2px solid #fafafa; border-top-color: #c8c8c8; background: #fafafa; overflow: hidden; }
.devices { height: 314px; }
.table .thead { height: 36px; display: flex; position: relative; justify-content: center; align-items: center; }
.table .tr { height: 36px; line-height: 35px; padding-left: 12px; display: flex; }
.table .tr:nth-child(odd) { background: #f4f4f4; }
.table .tr.selected { background: #0696d7; color: #fff; letter-spacing: 1.2px; }
.sets .tr { letter-spacing: 1.05px; }
.sets .tr.bottom-side { letter-spacing: .68px; }
.sets .thead .tri { position: absolute; right: 14px; }
.devices .thead { display: grid; grid-template-columns: 113px 363px 120px; justify-items: center; }
.devices .thead .tri { position: absolute; left: 446px; top: 11px; }
.devices .thead i { background: #ebebeb; align-self: stretch; width: 100%; }
.devices .tr { padding-left: 10px; line-height: 31px; letter-spacing: .6px; }
.devices .wide { letter-spacing: 1px; }
.devices .tr span:first-child { width: 114px; letter-spacing: .2px; }
.devices .short { width: 476px; }
.items .thead { display: grid; grid-template-columns: 152px 30px 190px 208px; justify-items: center; justify-content: start; padding-left: 6px; margin-left: 17px; }
.items .tri { justify-self: start; margin-left: -5px; }
.splitter { height: 44px; flex: none; display: flex; justify-content: center; }
.splitter i { width: 12px; height: 12px; border-radius: 50%; border: 1px solid #aaa; background: #ccc; margin-top: 1px; }

.editor { flex: 1; display: flex; flex-direction: column; padding: 0 2px 2px; }
.command { height: 68px; display: flex; align-items: center; padding: 0 6px 0 17px; flex: none; }
.command span { width: 307px; letter-spacing: 1.2px; }
.entry { flex: 1; height: 52px; border: 2px solid #0696d7; background: #fff; display: flex; align-items: center; justify-content: flex-end; padding-right: 10px; }
.canvas { flex: 1; position: relative; background: #fafafa; }
.board { background: #282828; }
.silk { font: 30px "Liberation Mono", monospace; fill: #a0a0a0; }
.silk .pin { font-size: 20px; }
.side-tabs { position: absolute; left: 1966px; top: 4px; display: flex; flex-direction: column; gap: 15px; }
.side-tabs a { width: 58px; height: 315px; background: #444; color: #fff; display: flex; flex-direction: column; align-items: center; padding-top: 17px; gap: 15px; }
.side-tabs a.fusion { padding-top: 42px; gap: 22px; }
.side-tabs a.team { gap: 24px; }
.side-tabs span { writing-mode: vertical-rl; font-size: 25px; line-height: 30px; letter-spacing: .65px; -webkit-text-stroke: .7px; }
.side-tabs .fusion span { letter-spacing: 1px; }
.side-tabs .team span { letter-spacing: .1px; }

.status { height: 50px; flex: none; display: flex; align-items: center; border-top: 2px solid #808080; padding: 0 3px 0 12px; gap: 16px; }
.status span { flex: 1; letter-spacing: .75px; }
```
